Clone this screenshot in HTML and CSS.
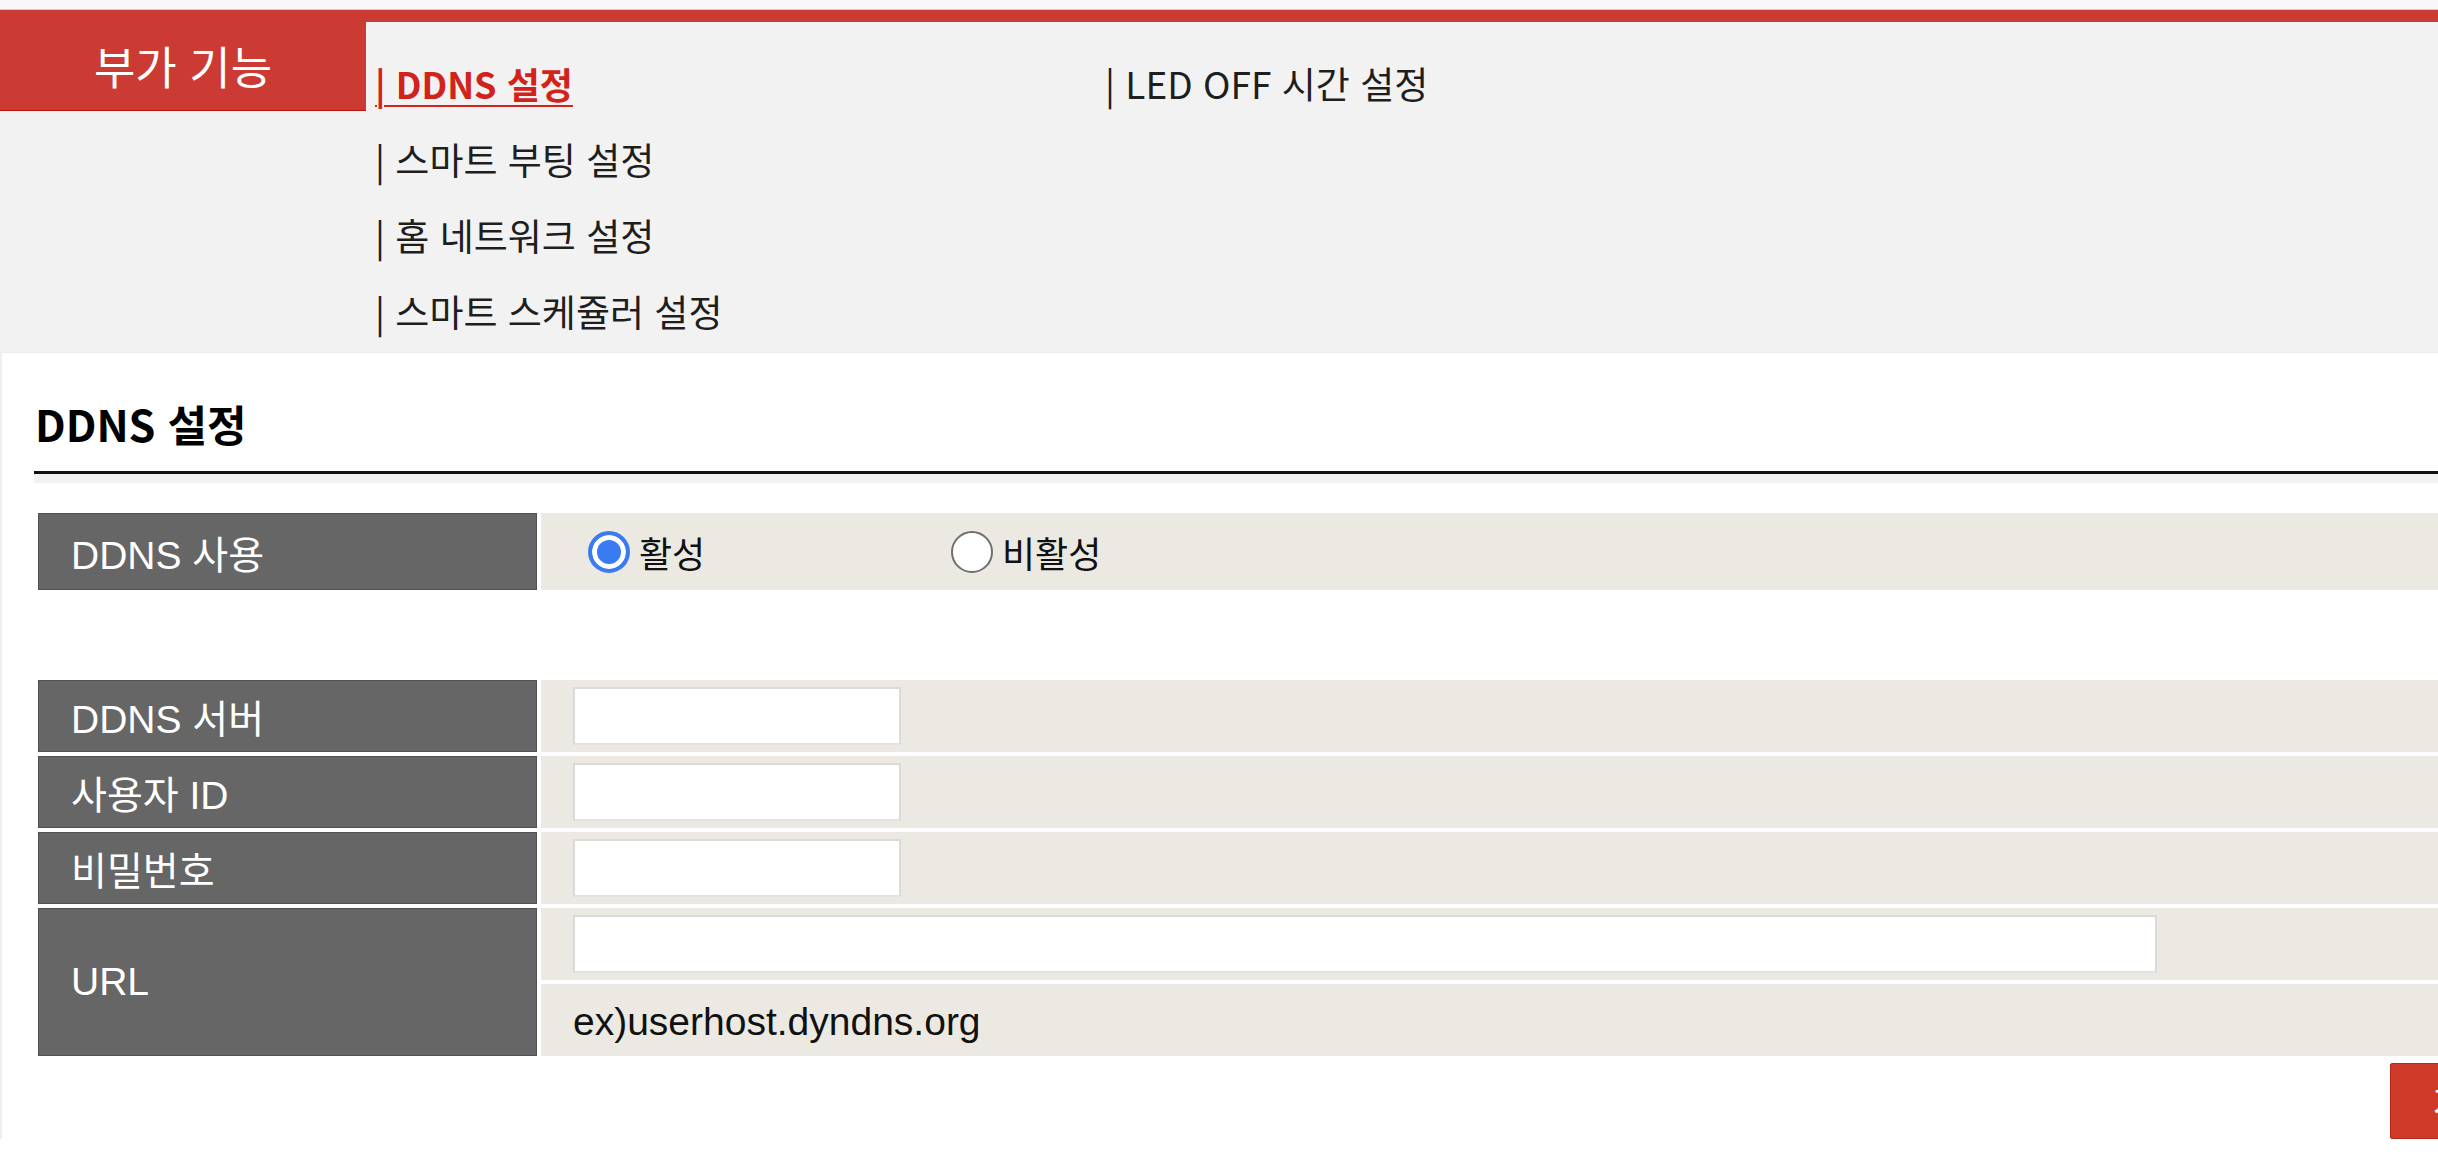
FILE: index.html
```html
<!DOCTYPE html>
<html lang="ko">
<head>
<meta charset="utf-8">
<title>DDNS 설정</title>
<link rel="stylesheet" href="styles.css">
</head>
<body>
<div class="topstrip"></div>
<div class="gnb">
  <div class="tab">부가 기능</div>
  <div class="menu">
    <ul class="menu-col first">
      <li><a class="active" href="#">| DDNS 설정</a></li>
      <li><a href="#">| 스마트 부팅 설정</a></li>
      <li><a href="#">| 홈 네트워크 설정</a></li>
      <li><a href="#">| 스마트 스케쥴러 설정</a></li>
    </ul>
    <ul class="menu-col">
      <li><a href="#">| LED OFF 시간 설정</a></li>
    </ul>
  </div>
</div>
<div class="content">
  <h2 class="title">DDNS 설정</h2>
  <div class="sep"></div>
  <table class="form radio-table">
    <colgroup><col class="col-label"><col></colgroup>
    <tr class="row">
      <th>DDNS 사용</th>
      <td class="val radios">
        <div class="opts">
          <label class="opt first-opt"><input type="radio" name="use" checked><span>활성</span></label>
          <label class="opt"><input type="radio" name="use"><span>비활성</span></label>
        </div>
      </td>
    </tr>
  </table>
  <table class="form fields">
    <colgroup><col class="col-label"><col></colgroup>
    <tr class="row">
      <th>DDNS 서버</th>
      <td class="val"><input class="txt" type="text"></td>
    </tr>
    <tr class="row">
      <th>사용자 ID</th>
      <td class="val"><input class="txt" type="text"></td>
    </tr>
    <tr class="row">
      <th>비밀번호</th>
      <td class="val"><input class="txt" type="password"></td>
    </tr>
    <tr class="row">
      <th rowspan="2">URL</th>
      <td class="val"><input class="txt wide" type="text"></td>
    </tr>
    <tr class="row">
      <td class="val example">ex)userhost.dyndns.org</td>
    </tr>
  </table>
  <div class="actions">
    <button class="save" type="button">저장</button>
  </div>
</div>
</body>
</html>
```
FILE: styles.css
```css
html, body {
  margin: 0;
  padding: 0;
  overflow: hidden;
  background: #fff;
}
body {
  font-family: "Liberation Sans", "Noto Sans CJK KR", sans-serif;
  color: #111;
}
.topstrip {
  height: 9px;
  background: #f8f8f8;
  border-bottom: 1px solid #cfcfcf;
}
.gnb {
  display: flex;
  align-items: flex-start;
  height: 330px;
  background: #f2f2f2;
  border-top: 12px solid #cc3a34;
  border-bottom: 1px solid #ececec;
  font-family: "Noto Sans CJK KR", sans-serif;
}
.tab {
  width: 366px;
  height: 89px;
  box-sizing: border-box;
  background: #cc3a34;
  border-bottom: 1px solid #c0140e;
  color: #fff;
  font-size: 45px;
  font-weight: 400;
  display: flex;
  align-items: center;
  justify-content: center;
  padding: 0 0 2px 0;
}
.menu {
  display: flex;
  padding-left: 9px;
  padding-top: 23px;
}
.menu-col {
  list-style: none;
  margin: 0;
  padding: 0;
}
.menu-col.first {
  width: 730px;
}
.menu-col li {
  height: 76px;
  line-height: 76px;
  font-size: 37px;
}
.menu-col a {
  color: #1e1e1e;
  text-decoration: none;
}
.menu-col a.active {
  color: #d2231a;
  font-weight: 700;
  font-size: 36px;
  text-decoration: underline;
  text-decoration-thickness: 2px;
  text-underline-offset: 6px;
}
.content {
  width: 2540px;
  box-sizing: border-box;
  padding: 40px 0 0 32px;
  border-left: 2px solid #efefef;
}
.title {
  margin: 0;
  font-family: "Noto Sans CJK KR", sans-serif;
  font-size: 43px;
  font-weight: 700;
  line-height: 60px;
  padding-bottom: 18px;
  padding-left: 1px;
  border-bottom: 3px solid #111;
  color: #000;
}
.sep {
  height: 9px;
  background: #f2f2f2;
}
.form {
  width: 100%;
  table-layout: fixed;
  border-collapse: separate;
  border-spacing: 4px;
}
.col-label {
  width: 499px;
}
.radio-table {
  margin-top: 26px;
}
.radio-table .row {
  height: 77px;
}
.fields {
  margin-top: 82px;
}
.fields .row {
  height: 72px;
}
.form th {
  background: #666;
  border: 1px solid #505050;
  color: #fff;
  font-weight: 400;
  font-size: 39px;
  text-align: left;
  padding: 0 0 0 32px;
  vertical-align: middle;
}
.val {
  background: #ebe9e1;
  padding: 0 0 0 32px;
  vertical-align: middle;
  font-size: 39px;
  color: #111;
}
.radios {
  padding-left: 47px;
}
.opts {
  display: flex;
  align-items: center;
}
.opt {
  display: flex;
  align-items: center;
}
.first-opt {
  width: 363px;
}
.opt span {
  margin-left: 9px;
  font-size: 36px;
}
.opt input {
  appearance: none;
  -webkit-appearance: none;
  margin: 0;
  width: 42px;
  height: 42px;
  border-radius: 50%;
  border: 2px solid #6f6f6f;
  background: #fff;
  box-sizing: border-box;
}
.opt input:checked {
  border: 4px solid #3a7bf2;
  background: #3a7bf2;
  box-shadow: inset 0 0 0 5px #fff;
}
.txt {
  display: block;
  width: 328px;
  height: 58px;
  box-sizing: border-box;
  border: 2px solid #dadada;
  border-bottom-color: #e2e2e2;
  background: #fff;
  margin: 0;
  padding: 0 8px;
  font-size: 30px;
}
.txt.wide {
  width: 1584px;
}
.example {
  padding-top: 4px;
}
.actions {
  display: flex;
  justify-content: flex-end;
  margin-top: 3px;
}
.save {
  width: 150px;
  height: 76px;
  background: #cf3a28;
  border: 1px solid #b52a1c;
  border-radius: 2px;
  color: #fff;
  font-family: "Noto Sans CJK KR", sans-serif;
  font-size: 36px;
  text-align: left;
  padding: 0 0 0 42px;
}
```
